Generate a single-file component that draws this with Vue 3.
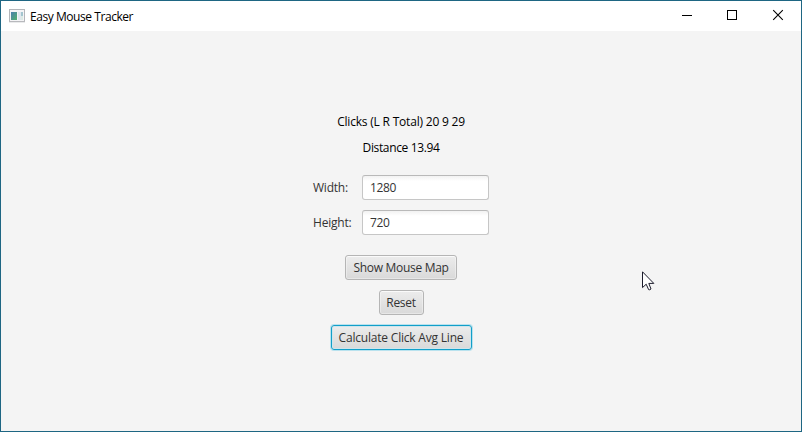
<script setup>
import { ref } from 'vue'

const width = ref('1280')
const height = ref('720')
</script>

<template>
  <div class="window">
    <header class="titlebar">
      <svg class="app-icon" width="16" height="14" viewBox="0 0 16 14">
        <defs>
          <linearGradient id="pane" x1="0" y1="0" x2="1" y2="1">
            <stop offset="0" stop-color="#4a7fae" />
            <stop offset="1" stop-color="#52b06c" />
          </linearGradient>
        </defs>
        <rect x=".5" y=".5" width="15" height="12" fill="#f4f4f6" stroke="#b4b6ba" />
        <path d="M0 12.8h16" stroke="#b9bbbf" />
        <rect x="2" y="3" width="6" height="8" fill="url(#pane)" />
        <rect x="9" y="3" width="3" height="8" fill="#dfe7ee" />
        <rect x="12" y="3" width="2" height="4" fill="#a3c5cf" />
        <rect x="12" y="7" width="2" height="4" fill="#dceae4" />
      </svg>
      <span class="title">Easy Mouse Tracker</span>
      <div class="controls">
        <svg width="46" height="30" viewBox="0 0 46 30" shape-rendering="crispEdges">
          <path d="M19 14.5h10" stroke="#000" />
        </svg>
        <svg width="46" height="30" viewBox="0 0 46 30" shape-rendering="crispEdges">
          <rect x="18.5" y="9.5" width="9" height="9" fill="none" stroke="#000" />
        </svg>
        <svg width="46" height="30" viewBox="0 0 46 30">
          <path d="M18.2 9.2l9.6 9.6M27.8 9.2l-9.6 9.6" stroke="#000" stroke-width="1.1" />
        </svg>
      </div>
    </header>
    <main class="content">
      <div class="stat clicks">Clicks (L R Total) 20 9 29</div>
      <div class="stat distance">Distance 13.94</div>
      <div class="form">
        <label for="w">Width:</label>
        <input id="w" v-model="width" />
        <label for="h">Height:</label>
        <input id="h" v-model="height" />
      </div>
      <button class="show">Show Mouse Map</button>
      <button class="reset">Reset</button>
      <button class="calc focused">Calculate Click Avg Line</button>
    </main>
    <svg class="cursor" width="13" height="20" viewBox="0 0 13 20">
      <path d="M.5 .8V16.6L4.2 13.2L6.6 18.6Q7.6 19.2 9 18L6.8 12.4H11.8Z" fill="#fff" stroke="#1c1c2c" stroke-width="1" />
    </svg>
  </div>
</template>

<style>
body { margin: 0; }
</style>

<style scoped>
.window {
  position: relative;
  box-sizing: border-box;
  width: 802px;
  height: 432px;
  border: 1px solid #1e6683;
  background: #f4f4f4;
  display: flex;
  flex-direction: column;
  overflow: hidden;
  font-family: "Open Sans", "Noto Sans", sans-serif;
  font-size: 12px;
}
.titlebar {
  height: 30px;
  flex: none;
  display: flex;
  align-items: center;
  background: #fff;
  padding-left: 8px;
}
.app-icon { margin-right: 5px; }
.title { color: #000; letter-spacing: -0.44px; white-space: nowrap; }
.controls { display: flex; margin-left: auto; }
.content {
  flex: 1;
  display: flex;
  flex-direction: column;
  align-items: center;
  padding-top: 83px;
}
.stat {
  height: 16px;
  line-height: 16px;
  margin-bottom: 10px;
  color: #000;
  white-space: nowrap;
}
.clicks { letter-spacing: -0.2px; }
.distance { letter-spacing: -0.36px; }
.form {
  display: grid;
  grid-template-columns: 39px 127px;
  grid-auto-rows: 25px;
  gap: 10px;
  align-items: center;
  margin: 9px 0 20px;
}
label { color: #333; letter-spacing: -0.22px; white-space: nowrap; }
input {
  box-sizing: border-box;
  width: 127px;
  height: 25px;
  border: 1px solid #c6c6c6;
  border-top-color: #b9b9b9;
  border-radius: 3px;
  background: linear-gradient(#f2f2f2, #fff 5px);
  padding: 0 7px;
  font: inherit;
  letter-spacing: -0.4px;
  color: #333;
  outline: none;
}
button {
  box-sizing: border-box;
  height: 25px;
  margin: 0 0 10px;
  padding: 0;
  border: 1px solid #b5b5b5;
  border-radius: 3px;
  background: linear-gradient(#ececec, #d9d9d9);
  box-shadow: inset 0 0 0 1px rgba(255, 255, 255, 0.35), inset 0 1px 0 rgba(255, 255, 255, 0.6);
  font: inherit;
  letter-spacing: -0.3px;
  color: #333;
  white-space: nowrap;
}
.show { width: 112px; }
.reset { width: 45px; }
.calc { width: 141px; letter-spacing: -0.2px; }
.focused {
  border-color: #129fc9;
  box-shadow: 0 0 0 1px #b9e2ee, inset 0 0 0 1px #cfe5ec;
}
.cursor { position: absolute; left: 641px; top: 270px; }
</style>
